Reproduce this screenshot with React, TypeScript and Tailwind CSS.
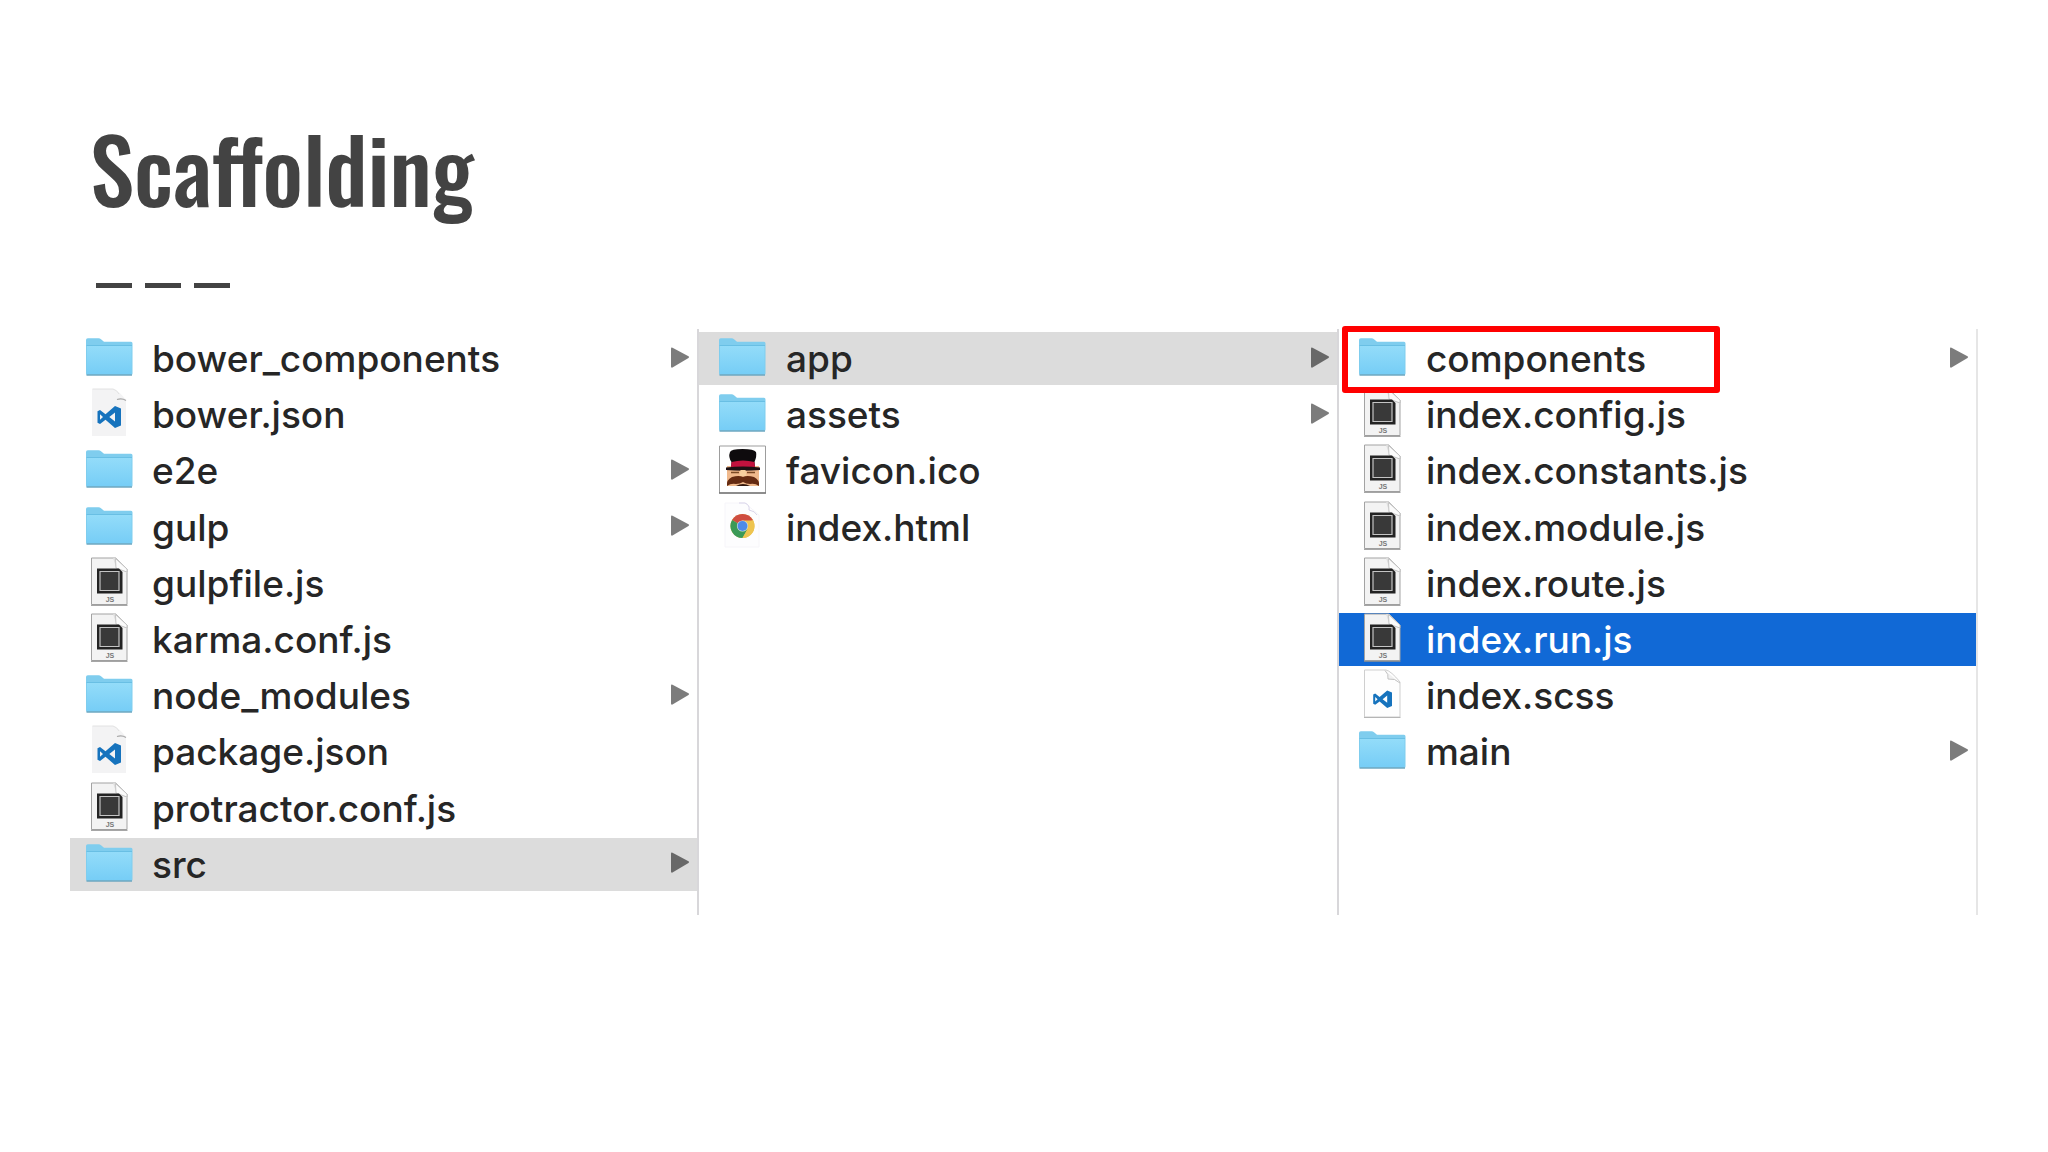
import clsx from "clsx";

type IconKind = "folder" | "js" | "code" | "codeSmall" | "favicon" | "html";

interface Entry {
  name: string;
  icon: IconKind;
  state?: "open" | "selected";
  marked?: boolean;
}

const COLUMNS: Entry[][] = [
  [
    { name: "bower_components", icon: "folder" },
    { name: "bower.json", icon: "code" },
    { name: "e2e", icon: "folder" },
    { name: "gulp", icon: "folder" },
    { name: "gulpfile.js", icon: "js" },
    { name: "karma.conf.js", icon: "js" },
    { name: "node_modules", icon: "folder" },
    { name: "package.json", icon: "code" },
    { name: "protractor.conf.js", icon: "js" },
    { name: "src", icon: "folder", state: "open" },
  ],
  [
    { name: "app", icon: "folder", state: "open" },
    { name: "assets", icon: "folder" },
    { name: "favicon.ico", icon: "favicon" },
    { name: "index.html", icon: "html" },
  ],
  [
    { name: "components", icon: "folder", marked: true },
    { name: "index.config.js", icon: "js" },
    { name: "index.constants.js", icon: "js" },
    { name: "index.module.js", icon: "js" },
    { name: "index.route.js", icon: "js" },
    { name: "index.run.js", icon: "js", state: "selected" },
    { name: "index.scss", icon: "codeSmall" },
    { name: "main", icon: "folder" },
  ],
];

// Gradients shared by every folder icon
const Defs = () => (
  <svg className="absolute h-0 w-0" aria-hidden="true">
    <defs>
      <linearGradient id="folder-front" x1="0" y1="0" x2="0" y2="1">
        <stop offset="0" stopColor="#93dcf9" />
        <stop offset="1" stopColor="#76cdf6" />
      </linearGradient>
    </defs>
  </svg>
);

const FolderArt = () => (
  <>
    <path
      d="M0 8Q0 6.3 1.8 6.3H12.5Q14 6.3 15 7.3L18 9.8H45Q46.5 9.8 46.5 11.5V41.5Q46.5 43 45 43H1.5Q0 43 0 41.5Z"
      fill="#7fcdee"
    />
    <path d="M1 14H45.5V42.5H1Z" fill="url(#folder-front)" />
    <path d="M0.5 13.5H46" stroke="#69bfe4" />
    <path d="M0.5 43H46" stroke="#6ea7c0" strokeWidth="1.6" />
  </>
);

const JsArt = () => (
  <>
    <path d="M5.5 1H30L41 12V47.5H5.5Z" fill="#f3f3f3" stroke="#a3a3a3" />
    <path d="M5 48.3H41.5" stroke="#909090" />
    <path d="M27 1H30L41 12V16L30 10Z" fill="#dedede" />
    <path d="M29.5 1.5L30 11L41 15V12Z" fill="#fbfbfb" stroke="#bbb" strokeWidth="0.8" />
    <path d="M11 11.5H33L36.5 15V36.5H11Z" fill="#232323" />
    <path
      d="M14 14.5H33V33.5H14Z"
      fill="#393939"
      stroke="#c4c4c4"
      strokeWidth="1.2"
    />
    <text
      x="24"
      y="44.5"
      textAnchor="middle"
      fontSize="7"
      fontWeight="700"
      fill="#777"
      fontFamily="Liberation Sans, sans-serif"
    >
      JS
    </text>
  </>
);

const BowTie = () => (
  <path
    fillRule="evenodd"
    d="M29 18L35 20.5V37.5L29 40L19.5 31.8L14 36L11.5 34.8V23.2L14 22L19.5 26.2ZM29 24.5L23.3 29L29 33.5ZM14 26.2V31.8L17 29Z"
    fill="#1673bd"
  />
);

const CodeArt = () => (
  <>
    <path d="M6 1H27Q33 3 40 12V48H6Z" fill="#f3f3f4" />
    <path d="M6.5 1H27Q31 2 33 6" fill="none" stroke="#e2e2e2" />
    <path d="M31 11.5Q36 10 40 12.5" fill="none" stroke="#a8a8a8" strokeWidth="1.2" />
    <BowTie />
  </>
);

const CodeSmallArt = () => (
  <>
    <path d="M5.5 1H27Q32 2 41 13V48H5.5Z" fill="#fefefe" stroke="#cfcfcf" />
    <path d="M5 48.5H41.5" stroke="#b5b5b5" />
    <path d="M26 1.5Q30 5 29 10Q36 9 41 14" fill="#f1f1f1" stroke="#c2c2c2" />
    <g transform="translate(5 7) scale(0.8)">
      <BowTie />
    </g>
  </>
);

const FaviconArt = () => (
  <>
    <path d="M0.5 2H46.5V49H0.5Z" fill="#fff" stroke="#9d9d9d" />
    <path d="M0 49H47" stroke="#777" strokeWidth="1.6" />
    <path d="M8 22H40V42H8Z" fill="#f0b98c" />
    <path d="M11 8Q12 5 23.5 5T37 8Q38 12 35.5 18L36 24H12L12.5 18Q9 13 11 8Z" fill="#0e0b0d" />
    <path d="M12.5 18Q24 15 35.5 18L36 24H12Z" fill="#c3123e" />
    <path d="M7 23.5Q24 21.5 41 23.5V26Q24 27.5 7 26Z" fill="#1d1013" />
    <path d="M12 28.5H20M28 28.5H36" stroke="#7b4a25" strokeWidth="1.5" />
    <path d="M21.5 26H26.5L27.5 32H20.5Z" fill="#f6cf9f" />
    <path d="M8 42Q7 36 13 33Q20 31 24 33Q28 31 35 33Q41 36 40 42Q36 39 31 40Q27 40 24 38Q21 40 17 40Q12 39 8 42Z" fill="#652b12" />
    <path d="M17 42Q24 38 31 42Z" fill="#33180f" />
  </>
);

const HtmlArt = () => (
  <>
    <path d="M6 2H26L40 14V46H6Z" fill="#fdfdfe" stroke="#f6f5f9" />
    <path d="M20 2H26Q31 4 30 9Q36 10 38 14" fill="none" stroke="#d9d5ea" />
    <circle cx="23.5" cy="25" r="12" fill="#e9c453" />
    <path d="M23.5 25L13.1 19A12 12 0 0 1 33.9 19Z" fill="#cf4d41" />
    <path d="M23.5 25L13.1 19A12 12 0 0 0 23.5 37L28.7 28Z" fill="#3b9a57" />
    <path d="M23.5 25V19.5H34.2A12 12 0 0 1 23.5 37L28.5 28Z" fill="#eec44f" />
    <circle cx="23.5" cy="25" r="5.6" fill="#d9e2dc" />
    <circle cx="23.5" cy="25" r="5" fill="#4d8be8" />
  </>
);

const ART: Record<IconKind, () => React.JSX.Element> = {
  folder: FolderArt,
  js: JsArt,
  code: CodeArt,
  codeSmall: CodeSmallArt,
  favicon: FaviconArt,
  html: HtmlArt,
};

const FileIcon = ({ kind }: { kind: IconKind }) => {
  const Art = ART[kind];
  return (
    <svg viewBox="0 0 48 53" className="h-[53px] w-12 shrink-0" aria-hidden="true">
      <Art />
    </svg>
  );
};

const Row = ({ entry }: { entry: Entry }) => (
  <li
    className={clsx(
      "relative flex h-[53px] items-center pr-[7px] pl-4 group-[.inner]:pl-5",
      entry.state === "open" && "bg-[#dcdcdc]",
      entry.state === "selected" ? "bg-[#1169d6] text-white" : "text-[#262626]",
    )}
  >
    <FileIcon kind={entry.icon} />
    <span className="ml-[18px] flex-1 text-[37px] leading-[53px] font-medium whitespace-nowrap group-[.inner]:ml-[19px]">
      {entry.name}
    </span>
    {entry.icon === "folder" && (
      <svg viewBox="0 0 20 26" className="h-[26px] w-5 shrink-0" aria-hidden="true">
        <path
          d="M1 2.5Q1 1 2.5 1.7L18.5 10.3Q19.8 11.1 18.5 12L2.5 21.5Q1 22.1 1 20.5Z"
          fill={entry.state === "open" ? "#686868" : "#7c7c7c"}
        />
      </svg>
    )}
    {entry.marked && (
      <div className="absolute -top-[6px] left-[3px] z-10 h-[67px] w-[378px] rounded-[3px] border-6 border-[#ff0000]" />
    )}
  </li>
);

export default function App() {
  return (
    <main className="min-h-screen bg-white px-[70px] pt-[112px] font-['Inter',sans-serif]">
      <Defs />
      <header className="px-5 text-[#434343]">
        <h1 className="font-['Oswald','Liberation_Sans_Narrow',sans-serif] text-[89px] leading-[110px] font-medium [font-variant-ligatures:none]">
          Scaffolding
        </h1>
        <div className="mt-[61px] ml-[6px] flex gap-[13px]">
          <span className="h-[5px] w-9 bg-[#434343]" />
          <span className="h-[5px] w-9 bg-[#434343]" />
          <span className="h-[5px] w-9 bg-[#434343]" />
        </div>
      </header>

      <div className="mt-[41px] grid grid-cols-[629fr_640fr_639fr]">
        {COLUMNS.map((entries, i) => (
          <ul
            key={i}
            className={clsx(
              "group grid h-[586px] grid-rows-10 border-r-2 pt-[3px] pb-[21px]",
              i > 0 && "inner",
              i < 2 ? "border-[#d8d7da]" : "border-[#e6e6e6]",
            )}
          >
            {entries.map((entry) => (
              <Row key={entry.name} entry={entry} />
            ))}
          </ul>
        ))}
      </div>
    </main>
  );
}
